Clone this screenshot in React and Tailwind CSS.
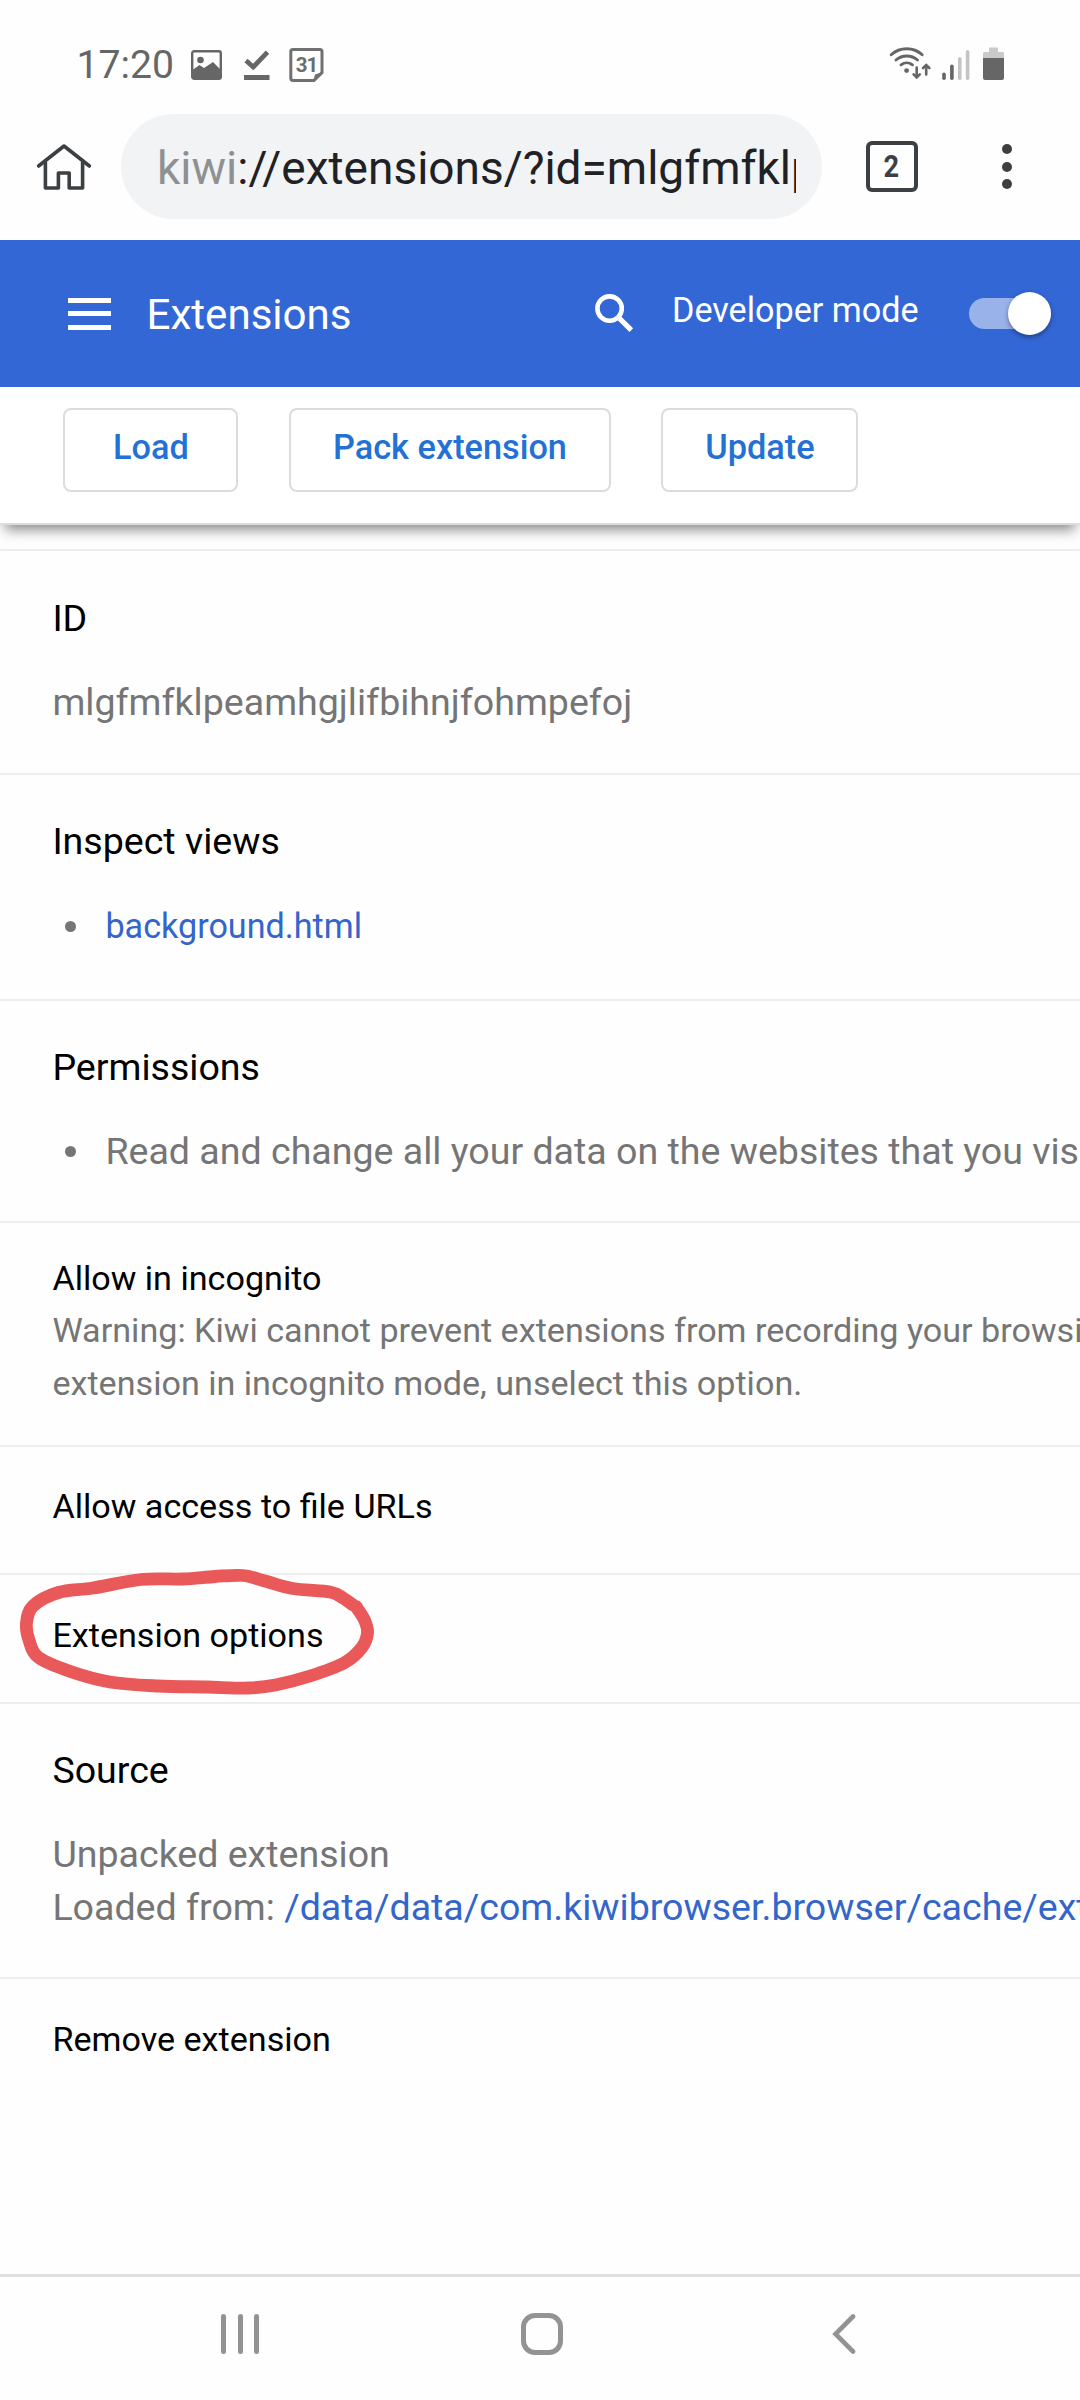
import React from "react";

function ImageIcon() {
  return (
    <svg className="ml-[15px] h-[30px] w-[31px]" viewBox="0 0 31 30">
      <rect x="1.2" y="1.2" width="28.6" height="27.6" rx="2" fill="none" stroke="#666" strokeWidth="2.4" />
      <circle cx="9.5" cy="10" r="3.3" fill="#666" />
      <path d="M1.5 20 L8.5 15 L13 18 L22 12 L29.5 19.5 V28.5 H1.5 Z" fill="#666" />
    </svg>
  );
}

function DownloadDoneIcon() {
  return (
    <svg className="ml-[22px] h-[30px] w-[26px]" viewBox="0 0 26 30">
      <path d="M2 10.5 L9.2 17 L23.5 2.2" fill="none" stroke="#666" strokeWidth="4.8" />
      <rect x="0" y="25" width="25.5" height="5" fill="#666" />
    </svg>
  );
}

function CalendarIcon() {
  return (
    <div className="relative ml-[19px] flex h-[34px] w-[35px] items-center justify-center">
      <svg className="absolute inset-0" width="35" height="34" viewBox="0 0 35 34">
        <path d="M4 1.6 H30.8 Q33 1.6 33 3.8 V24.6 L25 32.4 H4 Q1.8 32.4 1.8 30.2 V3.8 Q1.8 1.6 4 1.6 Z" fill="none" stroke="#707070" strokeWidth="3" />
        <path d="M24.4 32.4 L26 26.4 L33 24.2 Z" fill="#707070" />
      </svg>
      <span className="relative text-[20.5px] leading-none font-bold tracking-[-1px] text-[#6c6c6c]">31</span>
    </div>
  );
}

function WifiIcon() {
  return (
    <svg className="h-[34px] w-[42px]" viewBox="0 0 42 34">
      <g fill="none" stroke="#666" strokeWidth="2.9" strokeLinecap="round">
        <path d="M2.2 8.8 A23 23 0 0 1 33.2 8.8" />
        <path d="M7 14 A16.5 16.5 0 0 1 28.5 14" />
        <path d="M12 18.8 A9.5 9.5 0 0 1 23.5 18.8" />
        <path d="M27.7 21.5 V31 M24.6 28.4 L27.7 31.4 L30.8 28.4" strokeWidth="2.6" />
        <path d="M37.2 28.5 V19.5 M34.1 22 L37.2 19 L40.3 22" strokeWidth="2.6" />
      </g>
      <circle cx="17.6" cy="24.6" r="2.4" fill="#666" />
    </svg>
  );
}

function SignalIcon() {
  return (
    <svg className="ml-[11px] h-[30px] w-[28px]" viewBox="0 0 28 30">
      <rect x="0.2" y="22.5" width="3.6" height="7.5" rx="1.8" fill="#666" />
      <rect x="8.1" y="14.5" width="3.6" height="15.5" rx="1.8" fill="#666" />
      <rect x="16" y="7" width="3.6" height="23" rx="1.8" fill="#c4c4c4" />
      <rect x="23.8" y="0" width="3.6" height="30" rx="1.8" fill="#c4c4c4" />
    </svg>
  );
}

function BatteryIcon() {
  return (
    <svg className="ml-[13px] h-[33px] w-[21px]" viewBox="0 0 21 33">
      <path d="M6 0.5 H15 V5 H19.5 Q21 5 21 6.5 V12 H0 V6.5 Q0 5 1.5 5 H6 Z" fill="#cacaca" />
      <path d="M0 11 H21 V31 Q21 33 19 33 H2 Q0 33 0 31 Z" fill="#666" />
    </svg>
  );
}

function StatusBar() {
  return (
    <div className="flex h-[104px] items-start pt-[48px] pr-[76px] pl-[76.5px]">
      <div className="flex h-[34px] items-center">
        <span className="w-[99.5px] text-[39.2px] leading-[35px] text-[#666]">17:20</span>
        <ImageIcon />
        <DownloadDoneIcon />
        <CalendarIcon />
      </div>
      <div className="ml-auto flex h-[32px] items-end">
        <WifiIcon />
        <SignalIcon />
        <BatteryIcon />
      </div>
    </div>
  );
}

function AddressBar() {
  return (
    <div className="flex h-[136px] items-start pt-[10px]">
      <svg className="mt-[29px] ml-[36px] h-[50px] w-[56px] shrink-0" viewBox="0 0 56 50">
        <path d="M2.6 23 L28 3 L53.4 23" fill="none" stroke="#3c4043" strokeWidth="3.6" strokeLinecap="round" strokeLinejoin="round" />
        <path d="M9.4 19 V45 H22.4 V30 H33.2 V45 H46.6 V19" fill="none" stroke="#3c4043" strokeWidth="3.6" strokeLinejoin="round" />
      </svg>
      <div className="ml-[29px] h-[105px] w-[701px] shrink-0 rounded-full bg-[#f1f3f4] pr-[26px] pl-[36px]">
        <div className="overflow-hidden text-[46px] leading-[108px] whitespace-nowrap text-[#202124]">
          <span className="text-[#8e9092]">kiwi</span>://extensions/?id=mlgfmfklp
        </div>
      </div>
      <div className="mt-[27px] ml-[44px] flex h-[51px] w-[52px] shrink-0 items-center justify-center rounded-[6px] border-4 border-[#3c4043] pr-px pb-px text-[32px] leading-none font-bold text-[#3c4043]">
        <span className="inline-block origin-center scale-x-[.85]">2</span>
      </div>
      <div className="mt-[30px] ml-[84px] flex shrink-0 flex-col gap-[7.5px]">
        <span className="size-[10px] rounded-full bg-[#3c4043]" />
        <span className="size-[10px] rounded-full bg-[#3c4043]" />
        <span className="size-[10px] rounded-full bg-[#3c4043]" />
      </div>
    </div>
  );
}

function Header() {
  return (
    <header className="flex h-[147px] items-start bg-[#3367d6] text-white">
      <div className="mt-[57.5px] ml-[68px] flex w-[42.5px] flex-col gap-[8.5px]">
        <span className="h-[5px] bg-white" />
        <span className="h-[5px] bg-white" />
        <span className="h-[5px] bg-white" />
      </div>
      <h1 className="ml-[36px] w-[447px] pt-[47px] text-[42.1px] leading-[56px]">Extensions</h1>
      <svg className="mt-[53px] h-[40px] w-[40px]" viewBox="0 0 40 40">
        <circle cx="15.6" cy="15.6" r="12.2" fill="none" stroke="#fff" strokeWidth="4.6" />
        <path d="M24 24 L37.3 37.2" fill="none" stroke="#fff" strokeWidth="5.2" />
      </svg>
      <span className="ml-[38.5px] w-[296.5px] pt-[43.5px] text-[34.15px] leading-[53px]">Developer mode</span>
      <div className="mt-[52px] flex h-[43px] w-[82px] items-center">
        <span className="h-[31px] w-[82px] rounded-full bg-[#99b3ea]" />
        <span className="-ml-[43px] size-[43px] shrink-0 rounded-full bg-white shadow-[0_2px_5px_rgba(0,0,0,0.4)]" />
      </div>
    </header>
  );
}

const actions = [
  { label: "Load", size: "w-[175px]" },
  { label: "Pack extension", size: "w-[322px]" },
  { label: "Update", size: "w-[197px]" },
];

function Actions() {
  return (
    <div className="relative flex h-[138px] gap-[50.5px] border-b-2 border-[#dadce0] bg-white pt-[21px] pl-[63px] shadow-[0_10px_12px_-5px_rgba(0,0,0,0.45)]">
      {actions.map((a) => (
        <button key={a.label} className={a.size + " h-[84px] rounded-[8px] border-2 border-[#dadce0] pb-[5px] pl-px text-[34.3px] font-medium text-[#2471d6]"}>
          {a.label}
        </button>
      ))}
    </div>
  );
}

function Section({ className, title, children }) {
  return (
    <section className={className + " shrink-0 border-t-2 border-[#eee]"}>
      <h2 className="text-[37.55px] leading-[54px] text-black">{title}</h2>
      <div className="mt-[31px] text-[37.55px] leading-[53px] text-[#757575]">{children}</div>
    </section>
  );
}

function Bullet() {
  return <span className="mr-[29px] ml-[13px] size-[11px] shrink-0 rounded-full bg-[#757575]" />;
}

const ring = [
  [356, 1606.5], [364.5, 1620], [367.5, 1633], [361.5, 1648], [344, 1663], [310, 1676], [275.5, 1685],
  [248, 1688], [206.6, 1687], [158, 1686], [110, 1682], [69, 1671], [38, 1657], [29, 1640], [26.5, 1623],
  [33, 1606], [58.5, 1592.5], [93, 1588], [141, 1579.5], [182.5, 1579], [215, 1576.5], [243, 1575.5], [265, 1581],
  [293, 1588.5], [330, 1592], [343, 1598], [353, 1605],
];

function smooth(points) {
  let d = `M${points[0][0]} ${points[0][1]}`;
  for (let i = 0; i < points.length - 1; i++) {
    const a = points[Math.max(i - 1, 0)];
    const b = points[i];
    const c = points[i + 1];
    const e = points[Math.min(i + 2, points.length - 1)];
    d += ` C${b[0] + (c[0] - a[0]) / 6} ${b[1] + (c[1] - a[1]) / 6} ${c[0] - (e[0] - b[0]) / 6} ${c[1] - (e[1] - b[1]) / 6} ${c[0]} ${c[1]}`;
  }
  return d;
}

function HandDrawnRing() {
  return (
    <svg className="pointer-events-none absolute -top-[15px] left-0 h-[150px] w-[400px]" viewBox="0 1560 400 150">
      <path d={smooth(ring)} fill="none" stroke="#ea5959" strokeWidth="12.8" strokeLinecap="round" strokeLinejoin="round" />
    </svg>
  );
}

function Details() {
  return (
    <main className="flex h-[1749px] flex-col pt-[24px] whitespace-nowrap text-black">
      <Section className="h-[224px] pt-[40px] pl-[52.4px]" title="ID">mlgfmfklpeamhgjlifbihnjfohmpefoj</Section>
      <Section className="h-[226px] pt-[39px] pl-[52.4px]" title="Inspect views">
        <div className="flex items-center pt-px">
          <Bullet />
          <a className="text-[34.15px] text-[#3365cb]">background.html</a>
        </div>
      </Section>
      <Section className="h-[222px] pt-[39px] pl-[52.4px]" title="Permissions">
        <div className="flex items-center">
          <Bullet />
          <span>Read and change all your data on the websites that you vis</span>
        </div>
      </Section>
      <section className="h-[224px] shrink-0 border-t-2 border-[#eee] pt-[29px] pl-[52.4px] text-[34.13px]">
        <h2 className="leading-[52px]">Allow in incognito</h2>
        <p className="leading-[53px] text-[#757575]">
          Warning: Kiwi cannot prevent extensions from recording your browsi<br />
          extension in incognito mode, unselect this option.
        </p>
      </section>
      <div className="h-[128px] shrink-0 border-t-2 border-[#eee] pt-[33px] pl-[52.4px] text-[34.13px] leading-[53px]">Allow access to file URLs</div>
      <div className="relative h-[129px] shrink-0 border-t-2 border-[#eee] pt-[34px] pl-[52.4px] text-[34.13px] leading-[53px]">
        Extension options
        <HandDrawnRing />
      </div>
      <Section className="h-[275px] pt-[39px] pl-[52.4px]" title="Source">
        <p>Unpacked extension</p>
        <p>Loaded from: <a className="text-[#3365cb]">/data/data/com.kiwibrowser.browser/cache/ext</a></p>
      </Section>
      <div className="shrink-0 border-t-2 border-[#eee] pt-[34px] pl-[52.4px] text-[34.13px] leading-[53px]">Remove extension</div>
    </main>
  );
}

function NavigationBar() {
  return (
    <nav className="flex h-[126px] items-start border-t-3 border-[#dfdfdf] pt-[37px]">
      <div className="ml-[221px] flex h-[40px] w-[38px] justify-between">
        <span className="w-[5px] rounded-full bg-[#939393]" />
        <span className="w-[5px] rounded-full bg-[#939393]" />
        <span className="w-[5px] rounded-full bg-[#939393]" />
      </div>
      <div className="-mt-px ml-[262px] size-[42px] rounded-[14px] border-5 border-[#939393]" />
      <svg className="ml-[269px] h-[40px] w-[24px]" viewBox="0 0 24 40">
        <path d="M21 2.5 L3.5 20 L21 37.5" fill="none" stroke="#939393" strokeWidth="4.6" strokeLinecap="round" strokeLinejoin="miter" />
      </svg>
    </nav>
  );
}

export default function App() {
  return (
    <div className="flex h-[2400px] w-[1080px] flex-col overflow-hidden bg-[#fefefe] font-['Roboto',sans-serif]">
      <StatusBar />
      <AddressBar />
      <Header />
      <Actions />
      <Details />
      <NavigationBar />
    </div>
  );
}
